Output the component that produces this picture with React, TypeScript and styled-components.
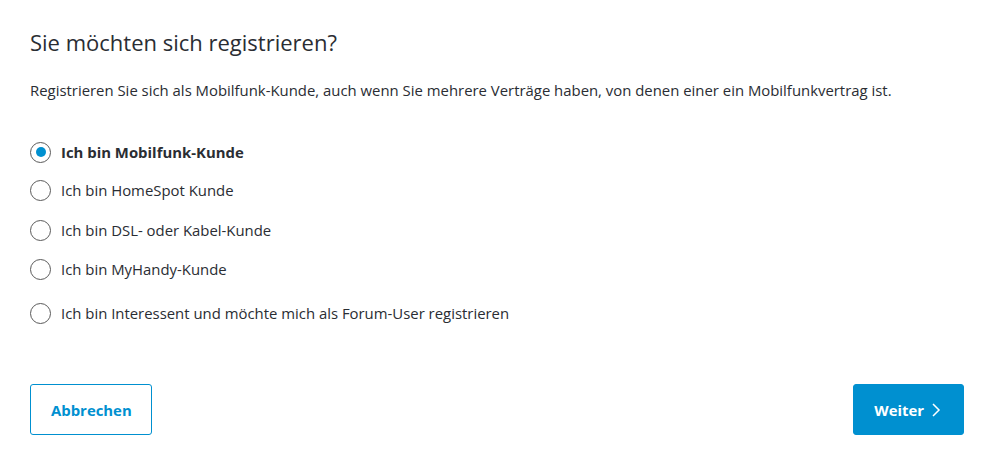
import React, { useState } from "react";
import styled, { createGlobalStyle } from "styled-components";

const Global = createGlobalStyle`
  html, body { margin: 0; padding: 0; background: #fff; }
  body { font-family: "Open Sans", "Noto Sans", sans-serif; color: #2a2d33; }
  * { box-sizing: border-box; }
`;

const Page = styled.div`
  width: 983px;
  height: 470px;
  padding: 26px 19px 0 30px;
  display: flex;
  flex-direction: column;
`;

const Title = styled.h1`
  margin: 0;
  font-size: 22px;
  font-weight: 400;
  line-height: 32px;
  color: #2a2d33;
`;

const Intro = styled.p`
  margin: 21px 0 0;
  font-size: 14.9px;
  line-height: 22px;
`;

const Options = styled.div`
  margin-top: 40px;
  display: flex;
  flex-direction: column;
`;

const Option = styled.label<{ $gap: number }>`
  display: flex;
  align-items: center;
  gap: 10px;
  height: 22px;
  margin-bottom: ${(p) => p.$gap}px;
  cursor: pointer;
  font-size: 14.9px;
`;

const Circle = styled.span<{ $on: boolean }>`
  width: 21px;
  height: 21px;
  border-radius: 50%;
  border: 1.5px solid #5a5a5a;
  display: flex;
  align-items: center;
  justify-content: center;
  flex: none;
  &::after {
    content: "";
    width: 10px;
    height: 10px;
    border-radius: 50%;
    background: ${(p) => (p.$on ? "#0090d0" : "transparent")};
  }
`;

const Text = styled.span<{ $on: boolean }>`
  font-weight: ${(p) => (p.$on ? 700 : 400)};
`;

const Actions = styled.div`
  margin-top: 60px;
  display: flex;
  justify-content: space-between;
`;

const Button = styled.button<{ $primary?: boolean }>`
  height: 51px;
  padding: ${(p) => (p.$primary ? "0 22px 0 20px" : "0 19px 0 20px")};
  border-radius: 3px;
  font-family: inherit;
  font-size: 14.9px;
  font-weight: 700;
  display: flex;
  align-items: center;
  gap: 7px;
  cursor: pointer;
  border: 1px solid #0090d0;
  background: ${(p) => (p.$primary ? "#0090d0" : "#fff")};
  color: ${(p) => (p.$primary ? "#fff" : "#0090d0")};
`;

const options = [
  "Ich bin Mobilfunk-Kunde",
  "Ich bin HomeSpot Kunde",
  "Ich bin DSL- oder Kabel-Kunde",
  "Ich bin MyHandy-Kunde",
  "Ich bin Interessent und möchte mich als Forum-User registrieren",
];
const gaps = [16, 18, 17, 22, 0];

export default function App() {
  const [sel, setSel] = useState(0);
  return (
    <>
      <Global />
      <Page>
        <Title>Sie möchten sich registrieren?</Title>
        <Intro>
          Registrieren Sie sich als Mobilfunk-Kunde, auch wenn Sie mehrere Verträge haben, von denen einer ein Mobilfunkvertrag ist.
        </Intro>
        <Options>
          {options.map((o, i) => (
            <Option key={o} $gap={gaps[i]} onClick={() => setSel(i)}>
              <Circle $on={sel === i} />
              <Text $on={sel === i}>{o}</Text>
            </Option>
          ))}
        </Options>
        <Actions>
          <Button>Abbrechen</Button>
          <Button $primary>
            Weiter
            <svg width="10" height="16" viewBox="0 0 10 16" fill="none">
              <path d="M2 2l6 6-6 6" stroke="#fff" strokeWidth="1.5" />
            </svg>
          </Button>
        </Actions>
      </Page>
    </>
  );
}
